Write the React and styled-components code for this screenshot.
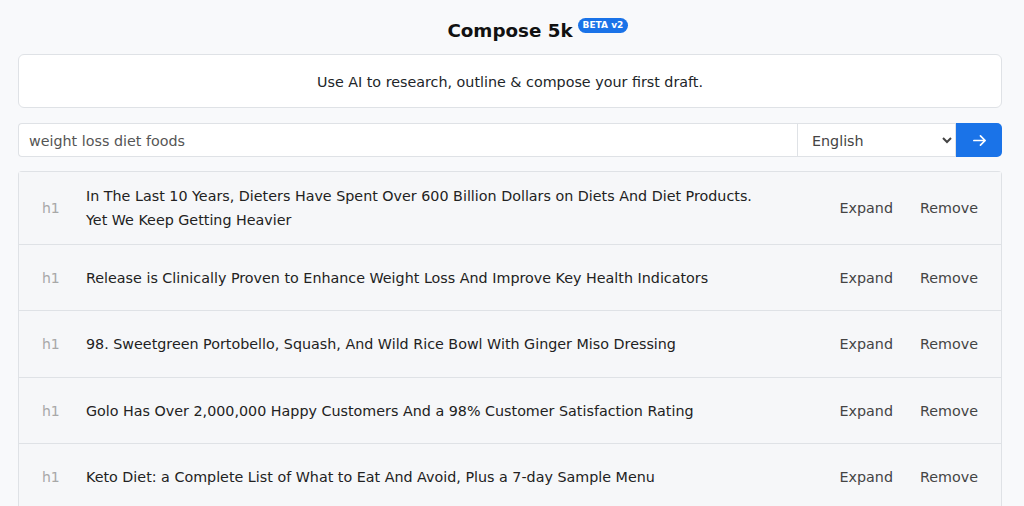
import styled, { createGlobalStyle } from "styled-components";

const GlobalStyle = createGlobalStyle`
  body {
    margin: 0;
    background: #f8f9fb;
    font-family: "DejaVu Sans", Verdana, sans-serif;
    color: #212529;
  }
`;

const headings = [
  "In The Last 10 Years, Dieters Have Spent Over 600 Billion Dollars on Diets And Diet Products. Yet We Keep Getting Heavier",
  "Release is Clinically Proven to Enhance Weight Loss And Improve Key Health Indicators",
  "98. Sweetgreen Portobello, Squash, And Wild Rice Bowl With Ginger Miso Dressing",
  "Golo Has Over 2,000,000 Happy Customers And a 98% Customer Satisfaction Rating",
  "Keto Diet: a Complete List of What to Eat And Avoid, Plus a 7-day Sample Menu",
];

const Page = styled.div`
  padding: 15px 22px 0 18px;
  display: flex;
  flex-direction: column;
`;

const TitleRow = styled.div`
  display: flex;
  justify-content: center;
  align-items: center;
  height: 30px;
  margin-bottom: 9px;
`;

const Title = styled.h1`
  position: relative;
  margin: 0;
  font-size: 18.3px;
  font-weight: 700;
  color: #111;
`;

const Badge = styled.span`
  position: absolute;
  left: calc(100% + 5px);
  top: -2px;
  background: #1a73e8;
  color: #fff;
  font-size: 9px;
  line-height: 11px;
  font-weight: 700;
  padding: 2px 5px;
  border-radius: 8px;
  white-space: nowrap;
`;

const Intro = styled.div`
  background: #fff;
  border: 1px solid #dfe2e6;
  border-radius: 6px;
  height: 54px;
  box-sizing: border-box;
  display: flex;
  align-items: center;
  justify-content: center;
  padding-top: 2px;
  font-size: 14.3px;
  margin-bottom: 15px;
`;

const SearchRow = styled.form`
  display: flex;
  height: 34px;
  margin-bottom: 14px;
`;

const Input = styled.input`
  flex: 1;
  border: 1px solid #dfe2e6;
  border-right: none;
  border-radius: 4px 0 0 4px;
  padding: 2px 10px 0;
  font: inherit;
  font-size: 14.3px;
  color: #555;
  background: #fff;
  outline: none;
`;

const Select = styled.select`
  width: 159px;
  border: 1px solid #dfe2e6;
  border-radius: 0;
  padding: 2px 8px 0 10px;
  font: inherit;
  font-size: 14.3px;
  color: #444;
  background: #fff;
`;

const Go = styled.button`
  width: 46px;
  border: none;
  border-radius: 0 5px 5px 0;
  background: #1a73e8;
  color: #fff;
  display: flex;
  align-items: center;
  justify-content: center;
  cursor: pointer;
`;

const List = styled.div`
  border: 1px solid #dfe2e6;
  border-bottom: none;
  border-radius: 4px 4px 0 0;
`;

const Row = styled.div`
  display: flex;
  align-items: center;
  padding: 12px 11px 11.6px 0;
  background: #f6f7f9;
  border-bottom: 1px solid #dfe2e6;
`;

const Tag = styled.span`
  width: 67px;
  flex-shrink: 0;
  padding-left: 23px;
  box-sizing: border-box;
  font-size: 14px;
  color: #a8a8a8;
`;

const Heading = styled.div`
  flex: 1;
  font-size: 14.3px;
  line-height: 24px;
  color: #222;
  padding-right: 56px;
`;

const Action = styled.button`
  border: none;
  background: none;
  height: 42px;
  padding: 0 12px;
  margin-left: 3px;
  font: inherit;
  font-size: 14.3px;
  color: #444;
  cursor: pointer;
`;

const ArrowIcon = () => (
  <svg width="15" height="15" viewBox="0 0 16 16" fill="none" stroke="currentColor" strokeWidth="1.8" strokeLinecap="round" strokeLinejoin="round">
    <path d="M2 8h12M9 3l5 5-5 5" />
  </svg>
);

export default function App() {
  return (
    <>
      <GlobalStyle />
      <Page>
        <TitleRow>
          <Title>
            Compose 5k
            <Badge>BETA v2</Badge>
          </Title>
        </TitleRow>
        <Intro>Use AI to research, outline &amp; compose your first draft.</Intro>
        <SearchRow onSubmit={(e) => e.preventDefault()}>
          <Input defaultValue="weight loss diet foods" />
          <Select defaultValue="English">
            <option>English</option>
          </Select>
          <Go type="submit">
            <ArrowIcon />
          </Go>
        </SearchRow>
        <List>
          {headings.map((h, i) => (
            <Row key={i}>
              <Tag>h1</Tag>
              <Heading>{h}</Heading>
              <Action>Expand</Action>
              <Action>Remove</Action>
            </Row>
          ))}
        </List>
      </Page>
    </>
  );
}
